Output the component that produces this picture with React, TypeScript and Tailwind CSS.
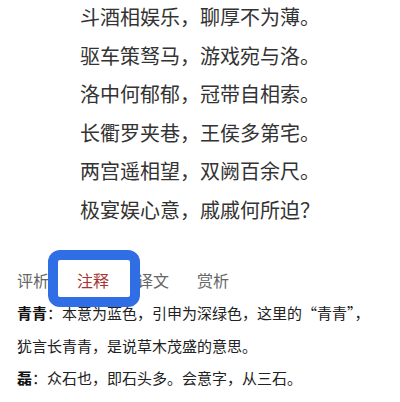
import React from "react";

const poem = [
  "斗酒相娱乐，聊厚不为薄。",
  "驱车策驽马，游戏宛与洛。",
  "洛中何郁郁，冠带自相索。",
  "长衢罗夹巷，王侯多第宅。",
  "两宫遥相望，双阙百余尺。",
  "极宴娱心意，戚戚何所迫？",
];

const tabs = ["评析", "注释", "译文", "赏析"];

export default function App() {
  return (
    <div
      className="relative w-[400px] h-[402px] overflow-hidden bg-white"
      style={{ fontFamily: '"Noto Sans CJK SC", "Noto Sans", sans-serif' }}
    >
      <div className="-mt-[2px] flex flex-col items-center text-[20px] leading-[38.5px] text-[#333]">
        {poem.map((l) => (
          <div key={l}>{l}</div>
        ))}
      </div>
      <div className="mt-[39px] flex gap-[28px] px-[17px] text-[16px] leading-[24px] text-[#666]">
        {tabs.map((t) => (
          <div key={t} className={t === "注释" ? "text-[#a83232]" : ""}>
            {t}
          </div>
        ))}
      </div>
      <div className="mt-[5px] px-[17px] text-[15px] leading-[32.5px] text-[#222]">
        <p>
          <b className="font-bold text-[#111]">青青</b>：本意为蓝色，引申为深绿色，这里的“青青”，
        </p>
        <p>犹言长青青，是说草木茂盛的意思。</p>
        <p>
          <b className="font-bold text-[#111]">磊</b>：众石也，即石头多。会意字，从三石。
        </p>
      </div>
      <div className="absolute left-[48px] top-[250px] w-[92px] h-[57px] rounded-[12px] border-[10px] border-[#2f6ee5]" />
    </div>
  );
}
